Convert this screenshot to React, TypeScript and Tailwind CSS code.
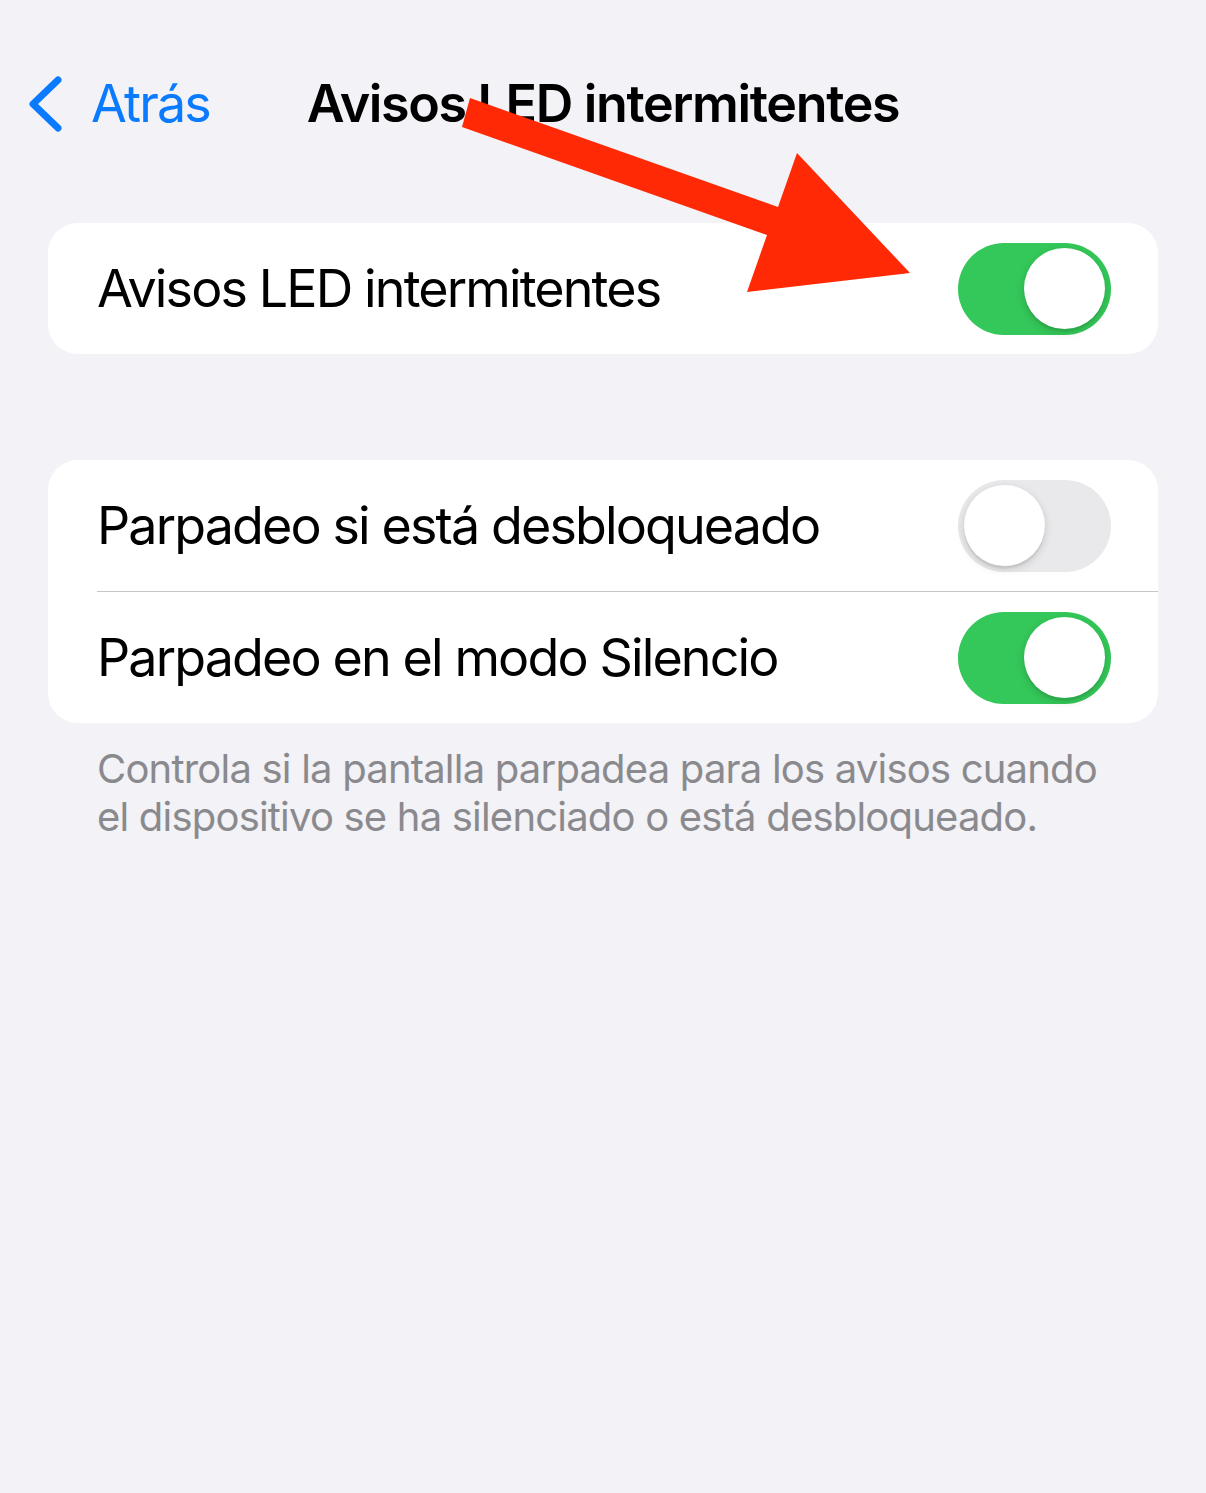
import React from "react";

type Row = { label: string; on: boolean };

function Toggle({ on }: { on: boolean }) {
  return (
    <div
      className={
        on
          ? "flex h-[92px] w-[153px] shrink-0 items-center justify-end rounded-full bg-[#34c759] px-[6px]"
          : "flex h-[92px] w-[153px] shrink-0 items-center justify-start rounded-full bg-[#e9e9eb] px-[6px]"
      }
    >
      <div className="h-[81px] w-[81px] rounded-full bg-white shadow-[0_3px_8px_rgba(0,0,0,0.15),0_3px_1px_rgba(0,0,0,0.06)]" />
    </div>
  );
}

function Card({ rows }: { rows: Row[] }) {
  return (
    <div className="mx-[48px] overflow-hidden rounded-[30px] bg-white">
      {rows.map((row, i) => (
        <div key={row.label} className="pl-[49px]">
          {i > 0 && <div className="h-px bg-[#c6c6c8]" />}
          <div className="flex h-[131px] items-center justify-between pr-[47px]">
            <span className="text-[52px] tracking-[-0.036em] text-black">{row.label}</span>
            <Toggle on={row.on} />
          </div>
        </div>
      ))}
    </div>
  );
}

export default function App() {
  return (
    <div
      className="relative min-h-[1493px] w-full bg-[#f2f2f7]"
      style={{ fontFamily: "Inter, 'Noto Sans', sans-serif" }}
    >
      {/* navigation bar */}
      <div className="grid h-[100px] grid-cols-[1fr_auto_1fr] items-center pt-[54px] box-content">
        <div className="flex items-center gap-[28px] pl-[27px] text-[#0a7aff]">
          <svg width="36" height="56" viewBox="0 0 36 56" fill="none">
            <path d="M31 4 L6 28 L31 52" stroke="currentColor" strokeWidth="7" strokeLinecap="round" strokeLinejoin="round" />
          </svg>
          <span className="text-[52px] tracking-[-0.035em]">Atrás</span>
        </div>
        <h1 className="text-[52px] font-semibold tracking-[-0.026em] text-black">Avisos LED intermitentes</h1>
        <div />
      </div>

      <div className="mt-[69px]">
        <Card rows={[{ label: "Avisos LED intermitentes", on: true }]} />
      </div>

      <div className="mt-[106px]">
        <Card
          rows={[
            { label: "Parpadeo si está desbloqueado", on: false },
            { label: "Parpadeo en el modo Silencio", on: true },
          ]}
        />
      </div>

      <p className="pl-[97px] pr-[108px] pt-[22px] text-[40px] leading-[48px] tracking-[-0.02em] text-[#8a8a8e]">
        Controla si la pantalla parpadea para los avisos cuando el dispositivo se ha silenciado o está desbloqueado.
      </p>

      {/* red callout arrow */}
      <svg className="pointer-events-none absolute left-0 top-0" width="1206" height="320" viewBox="0 0 1206 320">
        <polygon
          points="470,98 778,207 797,153 910,273 747,292 767,235 462,127"
          fill="#ff2a05"
        />
      </svg>
    </div>
  );
}
